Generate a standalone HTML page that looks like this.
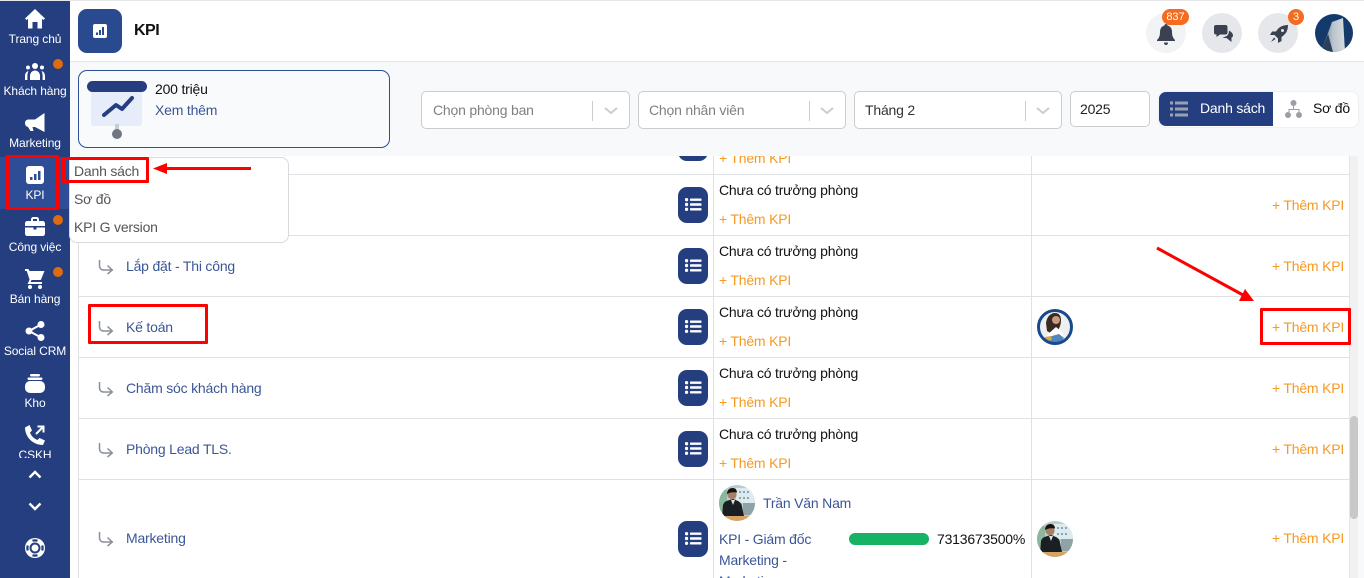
<!DOCTYPE html>
<html><head><meta charset="utf-8"><style>
html,body{margin:0;padding:0;width:1364px;height:578px;overflow:hidden;background:#fff}
body{position:relative;font-family:"Liberation Sans",sans-serif;font-size:14px;color:#000}
div,span,svg{position:absolute;box-sizing:border-box}
.t{white-space:nowrap;line-height:20px;height:20px;letter-spacing:-.2px}
.nav{color:#fff;font-size:12px;width:70px;left:0;text-align:center;line-height:14px;height:14px;white-space:nowrap;letter-spacing:-.1px}
.dot{width:10px;height:10px;border-radius:50%;background:#dd6b0f;left:53px}
.line{left:79px;width:1270px;height:1px;background:#dfe1e7}
.blue{color:#3b5696}
.or{color:#f59a23}
.blk{color:#111}
.btn{left:678px;width:30px;height:36px;border-radius:9px;background:#243e80}
.sel{height:38px;top:91px;background:#fff;border:1px solid #ccc;border-radius:5px;color:#808080}
.sel .t{left:11px;top:8px;color:#808080}
.sel i{position:absolute;top:9px;width:1px;height:20px;background:#ccc}
.red{border:3px solid #f00;border-radius:1px}
</style></head><body>
<svg width="0" height="0" style="left:0;top:0"><defs>
<g id="lst"><circle cx="1.500" cy="1.700" r="1.700" fill="#fff"/><circle cx="1.500" cy="6.500" r="1.700" fill="#fff"/><circle cx="1.500" cy="11.300" r="1.700" fill="#fff"/><rect x="5" y=".5" width="11.500" height="2.400" rx=".6" fill="#fff"/><rect x="5" y="5.300" width="11.500" height="2.400" rx=".6" fill="#fff"/><rect x="5" y="10.100" width="11.500" height="2.400" rx=".6" fill="#fff"/></g>
<path id="arr" d="M1.500 0v5.500c0 2.800 1.700 4.500 4.500 4.500h8M9.500 5.500l4.800 4.500-4.800 4" fill="none" stroke="#8a8f99" stroke-width="1.500"/>
<g id="man"><rect width="36" height="36" fill="#b7cccb"/><rect x="17" y="3" width="19" height="15" fill="#dfeaec"/><g fill="#7fa6c4"><rect x="20" y="6" width="2" height="2"/><rect x="24" y="6" width="2" height="2"/><rect x="28" y="6" width="2" height="2"/><rect x="20" y="12" width="2" height="2"/><rect x="24" y="12" width="2" height="2"/><rect x="28" y="12" width="2" height="2"/></g><rect x="24" y="18" width="12" height="12" fill="#8fa3a6"/><rect x="0" y="5" width="8" height="22" fill="#8db69f"/><path d="M3 32 4 20C5 17 7 16 9 15.500L14 14 19 16C21 17 23 19 23 22L25 31 14 33Z" fill="#1a1f24"/><path d="M12 15 14 20 16 15Z" fill="#dfe3e6"/><circle cx="13" cy="9.500" r="4.600" fill="#a87f66"/><path d="M8 9C8 5 10.500 3 13.500 3S18 5 18 7.500C15 7 11 7 8 9Z" fill="#171312"/><rect x="3" y="31" width="30" height="5" fill="#d8a262"/></g>
</defs></svg>

<!-- top -->
<div style="left:0;top:0;width:1364px;height:1px;background:#e5e7eb"></div>
<div style="left:70px;top:61px;width:1294px;height:1px;background:#e3e5ea"></div>
<div style="left:70px;top:62px;width:1294px;height:94px;background:#f8f9fb"></div>

<!-- sidebar -->
<div style="left:0;top:1px;width:70px;height:577px;background:#243e80"></div>
<div style="left:0;top:157px;width:70px;height:52px;background:#2d4d96"></div>
<svg style="left:25px;top:9px" width="20" height="20" viewBox="0 0 20 20"><path fill="#fff" d="M10 0 20 9.500 18.500 11 17 9.700V19.500H12.500V13H7.500V19.500H3V9.700L1.500 11 0 9.500Z"/></svg>
<div class="nav" style="top:32px">Trang chủ</div>
<svg style="left:25px;top:63px" width="20" height="18" viewBox="0 0 20 18" fill="#fff"><circle cx="10" cy="3" r="3"/><circle cx="3" cy="4.500" r="2"/><circle cx="17" cy="4.500" r="2"/><path d="M5 17v-4c0-3 2-5.500 5-5.500s5 2.500 5 5.500v4Z"/><path d="M0 17v-4c0-2.500 1.300-4.500 3.500-5-.7 1.300-1.100 3-1.100 5v4Z" transform="translate(0 0)"/><path d="M20 17v-4c0-2.500-1.300-4.500-3.500-5 .7 1.300 1.100 3 1.100 5v4Z"/></svg>
<div class="dot" style="top:59px"></div>
<div class="nav" style="top:84px">Khách hàng</div>
<svg style="left:25px;top:113px" width="20" height="20" viewBox="0 0 20 20" fill="#fff"><path d="M19.500 0V19L10 14H7.500L8.500 18H5.500L3 14C1 13.500 0 12 0 10S1 7 3 6.500H10Z"/></svg>
<div class="nav" style="top:136px">Marketing</div>
<svg style="left:26px;top:166px" width="18" height="18" viewBox="0 0 18 18"><rect width="18" height="18" rx="3" fill="#fff"/><rect x="4" y="11" width="2.500" height="3" fill="#2d4d96"/><rect x="8" y="8" width="2.500" height="6" fill="#2d4d96"/><rect x="12" y="5" width="2.500" height="9" fill="#2d4d96"/></svg>
<div class="nav" style="top:188px">KPI</div>
<svg style="left:25px;top:217px" width="20" height="19" viewBox="0 0 20 19" fill="#fff"><path d="M6 4V2.500C6 1 7 0 8.500 0h3C13 0 14 1 14 2.500V4h3.500C19 4 20 5 20 6.500V9H0V6.500C0 5 1 4 2.500 4ZM8 4h4V2H8Z"/><path d="M0 10.500H8.500V12.500H11.500V10.500H20V16.500C20 18 19 19 17.500 19H2.500C1 19 0 18 0 16.500Z"/></svg>
<div class="dot" style="top:215px"></div>
<div class="nav" style="top:240px">Công việc</div>
<svg style="left:25px;top:269px" width="20" height="20" viewBox="0 0 20 20" fill="#fff"><path d="M0 0H3.500L4.400 2H19.500L15.800 11H6.500L5.600 13H17V15H2.500L4.600 10.800 1.800 2H0Z"/><circle cx="5" cy="18" r="2"/><circle cx="15" cy="18" r="2"/></svg>
<div class="dot" style="top:267px"></div>
<div class="nav" style="top:292px">Bán hàng</div>
<svg style="left:25px;top:321px" width="20" height="20" viewBox="0 0 20 20" fill="#fff"><circle cx="16" cy="3.500" r="3.500"/><circle cx="4" cy="10" r="3.500"/><circle cx="16" cy="16.500" r="3.500"/><path d="M4 10 16 3.500M4 10 16 16.500" stroke="#fff" stroke-width="2"/></svg>
<div class="nav" style="top:344px">Social CRM</div>
<svg style="left:25px;top:374px" width="20" height="19" viewBox="0 0 20 19" fill="#fff"><rect x="5" y="0" width="10" height="2.500" rx="1.200"/><rect x="2.500" y="3.500" width="15" height="2.500" rx="1.200"/><rect x="0" y="7" width="20" height="12" rx="5"/></svg>
<div class="nav" style="top:396px">Kho</div>
<svg style="left:25px;top:425px" width="20" height="20" viewBox="0 0 20 20"><path fill="#fff" d="M0 2.500 4.500 0 7 5.500 5 7.500C6 10.500 8.500 13.500 12.500 15L14.500 13 20 15.500 18 20C8 20 0 12 0 2.500Z"/><path d="M11 9 18 2M12.500 1.500H18.500V7.500" fill="none" stroke="#fff" stroke-width="2"/></svg>
<div style="left:0;top:448px;width:70px;height:10px;overflow:hidden"><div class="nav" style="top:0">CSKH</div></div>
<svg style="left:28px;top:470px" width="14" height="9" viewBox="0 0 14 9"><path d="M1.500 7.500 7 2l5.500 5.500" fill="none" stroke="#fff" stroke-width="2.400"/></svg>
<svg style="left:28px;top:502px" width="14" height="9" viewBox="0 0 14 9"><path d="M1.500 1.500 7 7l5.500-5.500" fill="none" stroke="#fff" stroke-width="2.400"/></svg>
<svg style="left:25px;top:538px" width="20" height="20" viewBox="0 0 20 20"><circle cx="10" cy="10" r="10" fill="#fff"/><circle cx="10" cy="10" r="4.500" fill="none" stroke="#243e80" stroke-width="2"/><g stroke="#243e80" stroke-width="2.200" fill="none"><path d="M7.500 2.800A7.500 7.500 0 0 1 12.500 2.800"/><path d="M7.500 17.200A7.500 7.500 0 0 0 12.500 17.200"/><path d="M2.800 7.500A7.500 7.500 0 0 0 2.800 12.500"/><path d="M17.200 7.500A7.500 7.500 0 0 1 17.200 12.500"/></g></svg>

<!-- header -->
<div style="left:78px;top:9px;width:44px;height:44px;border-radius:9px;background:#2a4a8f"></div>
<svg style="left:93px;top:24px" width="14" height="14" viewBox="0 0 14 14"><rect width="14" height="14" rx="2" fill="#fff"/><rect x="3" y="8.500" width="2" height="2.500" fill="#2a4a8f"/><rect x="6" y="6" width="2" height="5" fill="#2a4a8f"/><rect x="9" y="3" width="2" height="8" fill="#2a4a8f"/></svg>
<div class="t" style="left:134px;top:21px;font-size:16px;font-weight:bold;color:#111;letter-spacing:-.5px">KPI</div>

<div style="left:1146px;top:13px;width:40px;height:40px;border-radius:50%;background:#f2f3f5"></div>
<svg style="left:1157px;top:24px" width="18" height="21" viewBox="0 0 18 21"><path fill="#3a4252" d="M9 0c1 0 1.500.7 1.500 1.500C13.500 2.200 15 4.500 15 8c0 4 1 6 3 8v1H0v-1c2-2 3-4 3-8 0-3.500 1.500-5.800 4.500-6.500C7.500.7 8 0 9 0ZM7 18.500h4C11 20 10.300 21 9 21S7 20 7 18.500Z"/></svg>
<div style="left:1162px;top:9px;width:27px;height:16px;border-radius:8px;background:#f56b1f;color:#fff;font-size:11px;line-height:16px;text-align:center">837</div>
<div style="left:1202px;top:13px;width:40px;height:40px;border-radius:50%;background:#e5e7eb"></div>
<svg style="left:1214px;top:25px" width="19" height="18" viewBox="0 0 19 18" fill="#3a4252"><path d="M2 0H11.500C12.700 0 13.500.8 13.500 2V7.500C13.500 8.700 12.700 9.500 11.500 9.500H6L2.500 12V9.500H2C.8 9.500 0 8.700 0 7.500V2C0 .8.800 0 2 0Z"/><path d="M15 5.500C17.500 7 19 8.500 19 10.500 19 11.500 18.500 12.300 17.500 12.500V17L12.500 13H8.500L11.500 11.500C13.500 11 15 9 15 5.500Z"/></svg>
<div style="left:1258px;top:13px;width:40px;height:40px;border-radius:50%;background:#e5e7eb"></div>
<svg style="left:1270px;top:25px" width="18" height="18" viewBox="0 0 18 18" fill="#3a4252"><path d="M18 0C18 6 15.500 9.500 11.500 12V16L8 18V13.500L4.500 10H0L2 6.500H6C8.500 2.500 12 0 18 0Z"/><path d="M4 12.500 1 17 5.500 14Z"/><circle cx="12.500" cy="5.500" r="1.500" fill="#e5e7eb"/></svg>
<div style="left:1288px;top:9px;width:16px;height:16px;border-radius:50%;background:#f56b1f;color:#fff;font-size:11px;line-height:16px;text-align:center">3</div>
<svg style="left:1315px;top:14px" width="38" height="38" viewBox="0 0 38 38"><defs><clipPath id="av"><circle cx="19" cy="19" r="19"/></clipPath><linearGradient id="sky" x1="0" y1="0" x2="0" y2="1"><stop offset="0" stop-color="#123a6e"/><stop offset="1" stop-color="#173a66"/></linearGradient><linearGradient id="bd" x1="0" y1="0" x2="1" y2="0"><stop offset="0" stop-color="#5c7590"/><stop offset=".5" stop-color="#b9c4cc"/><stop offset="1" stop-color="#d8dcdf"/></linearGradient></defs><g clip-path="url(#av)"><rect width="38" height="38" fill="url(#sky)"/><path d="M17 8 28 4 30 38H6Z" fill="url(#bd)"/><path d="M6 38 13 20 18 38Z" fill="#2a3f5b"/></g></svg>

<!-- card -->
<div style="left:78px;top:70px;width:312px;height:78px;border:1px solid #2d4d96;border-radius:9px;background:#f9fafc"></div>
<svg style="left:87px;top:81px" width="60" height="59" viewBox="0 0 60 59"><rect x="4" y="3" width="51" height="42" rx="3" fill="#e6ecfa"/><rect width="60" height="11" rx="5.500" fill="#243e80"/><rect x="28" y="43" width="4" height="8" fill="#c9ccd2"/><circle cx="30" cy="53" r="5" fill="#6f7680"/><path d="M17 34 29 24 35 28 45 17" fill="none" stroke="#243e80" stroke-width="4" stroke-linecap="round" stroke-linejoin="round"/></svg>
<div class="t blk" style="left:155px;top:79px">200 triệu</div>
<div class="t blue" style="left:155px;top:100px">Xem thêm</div>

<!-- filters -->
<div class="sel" style="left:421px;width:209px"><span class="t" style="left:11px;top:8px">Chọn phòng ban</span><i style="left:170px"></i><svg style="left:182px;top:15px" width="14" height="8" viewBox="0 0 14 8"><path d="M1 1l6 5 6-5" fill="none" stroke="#ccc" stroke-width="2"/></svg></div>
<div class="sel" style="left:638px;width:208px"><span class="t" style="left:10px;top:8px">Chọn nhân viên</span><i style="left:170px"></i><svg style="left:181px;top:15px" width="14" height="8" viewBox="0 0 14 8"><path d="M1 1l6 5 6-5" fill="none" stroke="#ccc" stroke-width="2"/></svg></div>
<div class="sel" style="left:854px;width:208px"><span class="t" style="left:10px;top:8px;color:#333">Tháng 2</span><i style="left:170px"></i><svg style="left:181px;top:15px" width="14" height="8" viewBox="0 0 14 8"><path d="M1 1l6 5 6-5" fill="none" stroke="#ccc" stroke-width="2"/></svg></div>
<div class="sel" style="left:1070px;width:80px;height:36px;top:91px"><span class="t" style="left:9px;top:7px;color:#222">2025</span></div>

<div style="left:1159px;top:92px;width:199px;height:35px;border-radius:7px;background:#fff;box-shadow:0 0 2px #dfe2e8"></div>
<div style="left:1159px;top:92px;width:114px;height:34px;border-radius:7px 0 0 7px;background:#243e80"></div>
<svg style="left:1170px;top:101px" width="18" height="16" viewBox="0 0 18 16" fill="#9aa1ad"><circle cx="1.500" cy="2" r="1.700"/><circle cx="1.500" cy="8" r="1.700"/><circle cx="1.500" cy="14" r="1.700"/><rect x="5" y=".5" width="13" height="3"/><rect x="5" y="6.500" width="13" height="3"/><rect x="5" y="12.500" width="13" height="3"/></svg>
<div class="t" style="left:1200px;top:98px;color:#fff">Danh sách</div>
<svg style="left:1285px;top:100px" width="17" height="18" viewBox="0 0 17 18" fill="#9a9ea6"><circle cx="8.500" cy="3" r="3"/><circle cx="3" cy="15" r="3"/><circle cx="14" cy="15" r="3"/><path d="M8 6h1v3h5.500v3h-1v-2h-9v2h-1V9H8Z"/></svg>
<div class="t blk" style="left:1313px;top:98px">Sơ đồ</div>

<!-- table -->
<div style="left:78px;top:156px;width:1px;height:422px;background:#dfe1e7"></div>
<div style="left:713px;top:156px;width:1px;height:422px;background:#dfe1e7"></div>
<div style="left:1031px;top:156px;width:1px;height:422px;background:#dfe1e7"></div>
<div class="line" style="top:174px"></div><div class="line" style="top:235px"></div><div class="line" style="top:296px"></div><div class="line" style="top:357px"></div><div class="line" style="top:418px"></div><div class="line" style="top:479px"></div>
<div style="left:1349px;top:156px;width:9px;height:422px;background:#f1f1f1;border-left:1px solid #e2e4ea"></div>
<div style="left:1350px;top:416px;width:8px;height:103px;border-radius:4px;background:#c8c8c8"></div>
<div style="left:1358px;top:156px;width:6px;height:422px;background:#f8f9fb"></div>

<!-- clipped row -->
<div style="left:70px;top:156px;width:1280px;height:18px;overflow:hidden">
<div class="btn" style="left:608px;top:-31px"></div>
<div class="t or" style="left:649px;top:-8px">+ Thêm KPI</div>
</div>

<!-- rows -->
<div class="btn" style="top:187px"></div><svg style="left:685px;top:198px" width="17" height="14"><use href="#lst"/></svg>
<div class="t blk" style="left:719px;top:180px">Chưa có trưởng phòng</div><div class="t or" style="left:719px;top:209px">+ Thêm KPI</div><div class="t or" style="left:1272px;top:195px">+ Thêm KPI</div>

<svg style="left:98px;top:260px" width="16" height="15"><use href="#arr"/></svg><div class="t blue" style="left:126px;top:256px">Lắp đặt - Thi công</div>
<div class="btn" style="top:248px"></div><svg style="left:685px;top:259px" width="17" height="14"><use href="#lst"/></svg>
<div class="t blk" style="left:719px;top:241px">Chưa có trưởng phòng</div><div class="t or" style="left:719px;top:270px">+ Thêm KPI</div><div class="t or" style="left:1272px;top:256px">+ Thêm KPI</div>

<svg style="left:98px;top:321px" width="16" height="15"><use href="#arr"/></svg><div class="t blue" style="left:126px;top:317px">Kế toán</div>
<div class="btn" style="top:309px"></div><svg style="left:685px;top:320px" width="17" height="14"><use href="#lst"/></svg>
<div class="t blk" style="left:719px;top:302px">Chưa có trưởng phòng</div><div class="t or" style="left:719px;top:331px">+ Thêm KPI</div><div class="t or" style="left:1272px;top:317px">+ Thêm KPI</div>
<svg style="left:1037px;top:309px" width="36" height="36" viewBox="0 0 36 36"><defs><clipPath id="w"><circle cx="18" cy="18" r="16"/></clipPath></defs><g clip-path="url(#w)"><rect width="36" height="36" fill="#eef0f0"/><path d="M9 14c1-7 5-10 9-10s6 3 6 7c0 4-1 7-3 10l-3-1-3 5-5-3Z" fill="#3a2a24"/><circle cx="19" cy="11" r="4" fill="#c89a80"/><path d="M10 26l9-8 7 6 1 10H12Z" fill="#fff"/><path d="M8 29l14-4 5 4-4 6H9Z" fill="#4f86bd"/><path d="M8 28l6-1 1 4-5 1Z" fill="#d8a642"/></g><circle cx="18" cy="18" r="16.500" fill="none" stroke="#17498c" stroke-width="3"/></svg>

<svg style="left:98px;top:382px" width="16" height="15"><use href="#arr"/></svg><div class="t blue" style="left:126px;top:378px">Chăm sóc khách hàng</div>
<div class="btn" style="top:370px"></div><svg style="left:685px;top:381px" width="17" height="14"><use href="#lst"/></svg>
<div class="t blk" style="left:719px;top:363px">Chưa có trưởng phòng</div><div class="t or" style="left:719px;top:392px">+ Thêm KPI</div><div class="t or" style="left:1272px;top:378px">+ Thêm KPI</div>

<svg style="left:98px;top:443px" width="16" height="15"><use href="#arr"/></svg><div class="t blue" style="left:126px;top:439px">Phòng Lead TLS.</div>
<div class="btn" style="top:431px"></div><svg style="left:685px;top:442px" width="17" height="14"><use href="#lst"/></svg>
<div class="t blk" style="left:719px;top:424px">Chưa có trưởng phòng</div><div class="t or" style="left:719px;top:453px">+ Thêm KPI</div><div class="t or" style="left:1272px;top:439px">+ Thêm KPI</div>

<svg style="left:98px;top:532px" width="16" height="15"><use href="#arr"/></svg><div class="t blue" style="left:126px;top:528px">Marketing</div>
<div class="btn" style="top:521px"></div><svg style="left:685px;top:532px" width="17" height="14"><use href="#lst"/></svg>
<svg style="left:719px;top:485px" width="36" height="36" viewBox="0 0 36 36"><defs><clipPath id="m"><circle cx="18" cy="18" r="18"/></clipPath></defs><g clip-path="url(#m)"><use href="#man"/></g></svg>
<div class="t blue" style="left:763px;top:493px">Trần Văn Nam</div>
<div style="left:719px;top:529px;width:110px;height:49px;overflow:hidden;line-height:21px;color:#3b5696;letter-spacing:-.2px">KPI - Giám đốc Marketing - Marketing</div>
<div style="left:849px;top:533px;width:80px;height:12px;border-radius:6px;background:#17b364"></div>
<div class="t blk" style="left:937px;top:529px">7313673500%</div>
<svg style="left:1037px;top:521px" width="36" height="36" viewBox="0 0 36 36"><defs><clipPath id="m2"><circle cx="18" cy="18" r="18"/></clipPath></defs><g clip-path="url(#m2)"><use href="#man"/></g></svg>
<div class="t or" style="left:1272px;top:528px">+ Thêm KPI</div>

<!-- popup -->
<div style="left:69px;top:157px;width:220px;height:86px;background:#fff;border:1px solid #d8dade;border-radius:0 8px 8px 8px"></div>
<div class="t" style="left:74px;top:161px;color:#555">Danh sách</div>
<div class="t" style="left:74px;top:189px;color:#555">Sơ đồ</div>
<div class="t" style="left:74px;top:217px;color:#555">KPI G version</div>

<!-- annotations -->
<div class="red" style="left:6px;top:155px;width:53px;height:55px"></div>
<div class="red" style="left:62px;top:157px;width:87px;height:26px"></div>
<div class="red" style="left:88px;top:304px;width:120px;height:40px"></div>
<div class="red" style="left:1260px;top:308px;width:91px;height:37px"></div>
<svg style="left:0;top:0" width="1364" height="578"><path d="M251 168.500H165" stroke="#f00" stroke-width="3"/><path d="M153 168.500 167 163V174Z" fill="#f00"/><path d="M1157 248 1243 295" stroke="#f00" stroke-width="3"/><path d="M1254 301 1239 301 1245 289Z" fill="#f00"/></svg>
</body></html>
